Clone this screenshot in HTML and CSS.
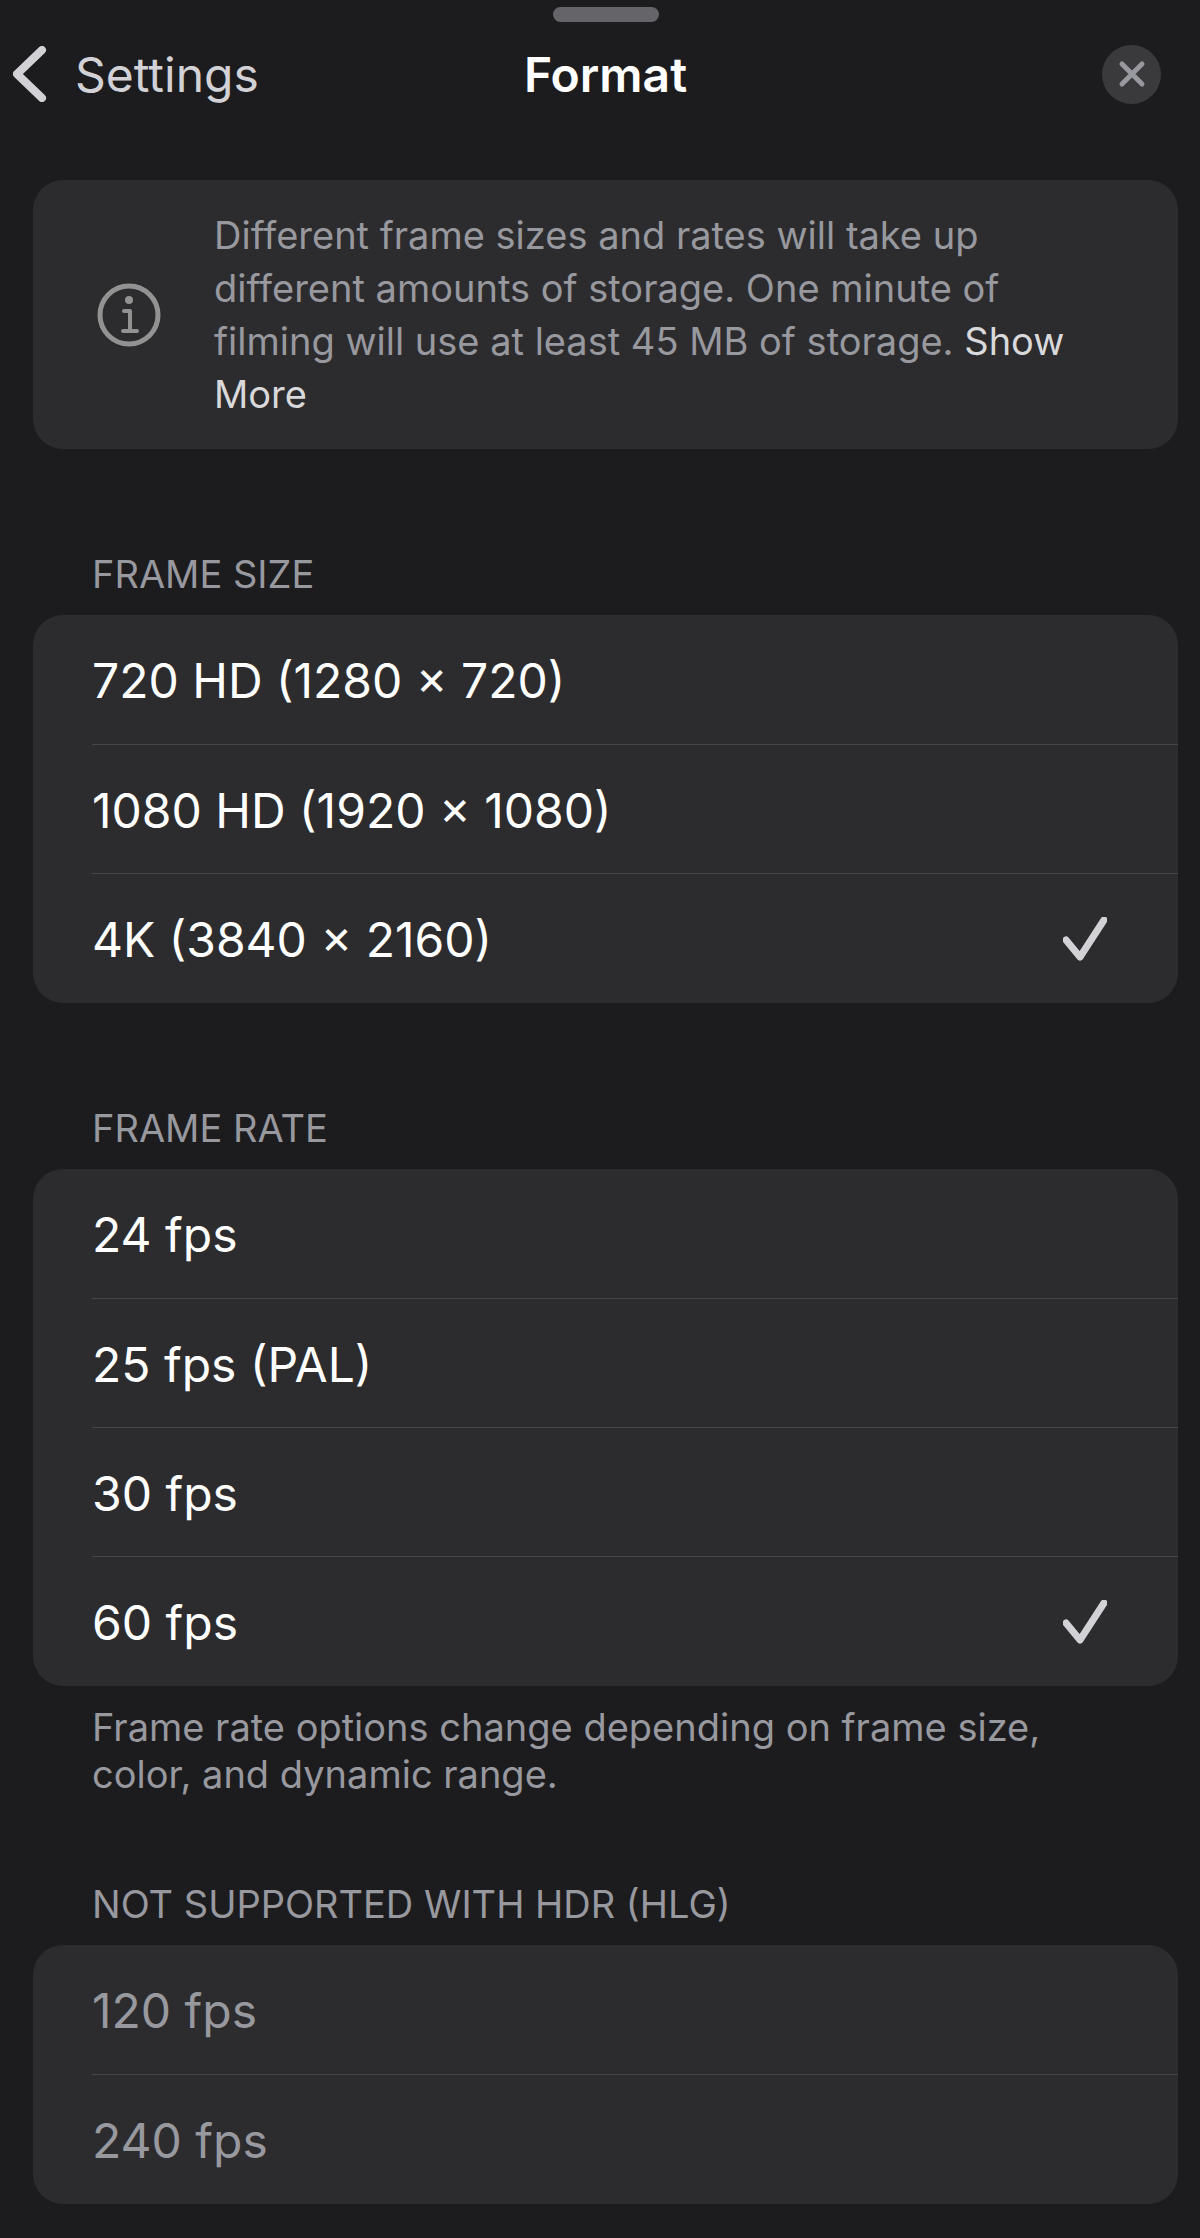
FILE: index.html
```html
<!DOCTYPE html>
<html lang="en">
<head>
    <meta charset="UTF-8">
    <meta name="viewport" content="width=device-width, initial-scale=1.0">
    <title>Format</title>
    <link rel="stylesheet" href="styles.css">
</head>
<body>
    <!-- shared checkmark -->
    <svg class="symbols" aria-hidden="true">
        <symbol id="check" viewBox="0 0 44 44">
            <path d="M3 23 L17 40 L41 3"/>
        </symbol>
    </svg>

    <div class="sheet">
        <div class="handle"></div>

        <header class="header">
            <button class="back-btn" type="button">
                <svg class="chevron" viewBox="0 0 34 56" aria-hidden="true"><path d="M29 4 L4 28 L29 52"/></svg>
                Settings
            </button>
            <h1>Format</h1>
            <button class="close-btn" type="button" aria-label="Close">
                <svg viewBox="0 0 24 24" aria-hidden="true"><path d="M2 2 L22 22 M22 2 L2 22"/></svg>
            </button>
        </header>

        <main>
            <div class="card info">
                <svg class="info-icon" viewBox="0 0 64 64" aria-hidden="true">
                    <circle class="ring" cx="32" cy="32" r="29"/>
                    <circle class="dot" cx="32" cy="17" r="4"/>
                    <path d="M27 28 H33 V48 M26 48 H40"/>
                </svg>
                <p>Different frame sizes and rates will take up different amounts of storage. One minute of filming will use at least 45 MB of storage. <a href="#">Show More</a></p>
            </div>

            <section>
                <h2>FRAME SIZE</h2>
                <div class="card list">
                    <label class="row"><span>720 HD (1280 × 720)</span><input type="radio" name="size"><svg class="check"><use href="#check"/></svg></label>
                    <label class="row"><span>1080 HD (1920 × 1080)</span><input type="radio" name="size"><svg class="check"><use href="#check"/></svg></label>
                    <label class="row"><span>4K (3840 × 2160)</span><input type="radio" name="size" checked><svg class="check"><use href="#check"/></svg></label>
                </div>
            </section>

            <section>
                <h2>FRAME RATE</h2>
                <div class="card list">
                    <label class="row"><span>24 fps</span><input type="radio" name="rate"><svg class="check"><use href="#check"/></svg></label>
                    <label class="row"><span>25 fps (PAL)</span><input type="radio" name="rate"><svg class="check"><use href="#check"/></svg></label>
                    <label class="row"><span>30 fps</span><input type="radio" name="rate"><svg class="check"><use href="#check"/></svg></label>
                    <label class="row"><span>60 fps</span><input type="radio" name="rate" checked><svg class="check"><use href="#check"/></svg></label>
                </div>
                <p class="note">Frame rate options change depending on frame size, color, and dynamic range.</p>
            </section>

            <section class="unsupported">
                <h2>NOT SUPPORTED WITH HDR (HLG)</h2>
                <div class="card list">
                    <label class="row"><span>120 fps</span><input type="radio" name="rate" disabled><svg class="check"><use href="#check"/></svg></label>
                    <label class="row"><span>240 fps</span><input type="radio" name="rate" disabled><svg class="check"><use href="#check"/></svg></label>
                </div>
            </section>
        </main>
    </div>
</body>
</html>
```
FILE: styles.css
```css
* {
    box-sizing: border-box;
}
body {
    margin: 0;
    background-color: #1c1c1e;
    color: #fff;
    font-family: Inter, "Liberation Sans", sans-serif;
    font-size: 48px;
}
h1, h2, p {
    margin: 0;
}
button {
    border: none;
    padding: 0;
    font: inherit;
    cursor: pointer;
}
svg {
    fill: none;
    stroke-linecap: round;
    stroke-linejoin: round;
}
.symbols {
    display: none;
}
.sheet {
    padding: 7px 22px 34px 33px;
}
.handle {
    width: 106px;
    height: 15px;
    margin: 0 auto;
    border-radius: 8px;
    background-color: #656469;
}

/* Header */
.header {
    display: grid;
    grid-template-columns: 1fr auto 1fr;
    align-items: center;
    height: 104px;
    margin-bottom: 54px;
}
.header h1 {
    font-size: 48px;
    font-weight: 600;
}
.back-btn {
    display: flex;
    align-items: center;
    justify-self: start;
    gap: 28px;
    margin-left: -20px;
    background: none;
    color: #d1d1d6;
}
.chevron {
    width: 34px;
    height: 56px;
    stroke: #d1d1d6;
    stroke-width: 8;
}
.close-btn {
    display: flex;
    align-items: center;
    justify-content: center;
    justify-self: end;
    width: 59px;
    height: 59px;
    margin-right: 17px;
    border-radius: 50%;
    background-color: #3a3a3d;
}
.close-btn svg {
    width: 24px;
    height: 24px;
    stroke: #98989f;
    stroke-width: 5;
    overflow: visible;
}

/* Cards */
.card {
    border-radius: 30px;
    background-color: #2c2c2e;
}
.info {
    display: flex;
    align-items: center;
    gap: 53px;
    padding: 29px 96px 28px 64px;
    color: #98989f;
    font-size: 38px;
    line-height: 53px;
}
.info a {
    color: #d9d9dc;
    text-decoration: none;
}
.info-icon {
    flex: none;
    width: 64px;
    height: 64px;
    stroke: #929292;
    stroke-width: 4;
}
.info-icon .ring {
    stroke-width: 5;
}
.info-icon .dot {
    fill: #929292;
    stroke: none;
}

/* Lists */
section {
    padding-top: 102px;
}
h2 {
    padding: 0 59px 17px;
    color: #98989f;
    font-size: 38px;
    font-weight: 400;
    line-height: 47px;
}
.list {
    padding-bottom: 1px;
}
.row {
    display: flex;
    align-items: center;
    justify-content: space-between;
    height: 129px;
    margin-left: 59px;
    padding: 2px 71px 0 0;
    cursor: pointer;
}
.row + .row {
    border-top: 1px solid #464649;
}
.row input {
    appearance: none;
    width: 0;
    height: 0;
    margin: 0;
}
.check {
    display: none;
    width: 44px;
    height: 44px;
    stroke: #d1d1d6;
    stroke-width: 7;
    overflow: visible;
}
.row input:checked + .check {
    display: block;
}
.note {
    padding: 18px 59px 0;
    color: #98989f;
    font-size: 38px;
    line-height: 47px;
}
.unsupported {
    padding-top: 83px;
}
.unsupported .row {
    color: #98989f;
    cursor: default;
}
```
